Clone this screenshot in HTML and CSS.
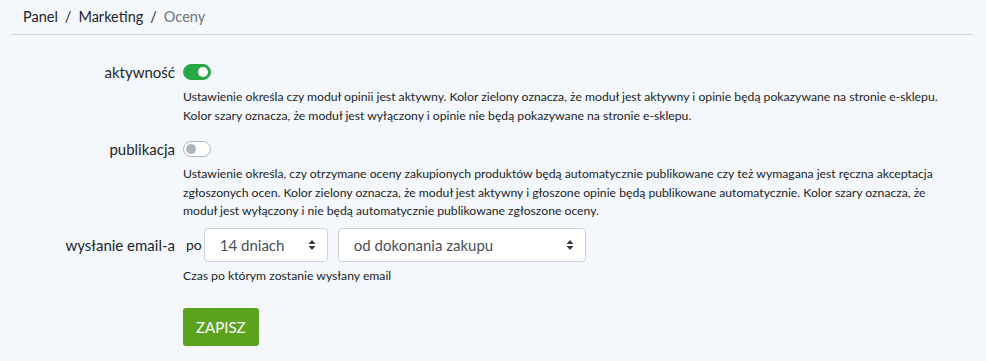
FILE: index.html
```html
<!DOCTYPE html>
<html lang="pl">
<head>
    <meta charset="UTF-8">
    <meta name="viewport" content="width=device-width, initial-scale=1.0">
    <title>Oceny</title>
    <link rel="stylesheet" href="styles.css">
</head>
<body>
    <div class="page">
        <nav class="breadcrumb">
            <a href="#">Panel</a>
            <span class="sep">/</span>
            <a href="#">Marketing</a>
            <span class="sep">/</span>
            <span class="current">Oceny</span>
        </nav>

        <form class="settings">
            <div class="row">
                <label class="row-label" for="active">aktywność</label>
                <div class="row-body">
                    <label class="switch">
                        <input type="checkbox" id="active" checked>
                        <span class="track"></span>
                    </label>
                    <p class="help">Ustawienie określa czy moduł opinii jest aktywny. Kolor zielony oznacza, że moduł jest aktywny i opinie będą pokazywane na stronie e-sklepu. Kolor szary oznacza, że moduł jest wyłączony i opinie nie będą pokazywane na stronie e-sklepu.</p>
                </div>
            </div>

            <div class="row">
                <label class="row-label" for="publish">publikacja</label>
                <div class="row-body">
                    <label class="switch">
                        <input type="checkbox" id="publish">
                        <span class="track"></span>
                    </label>
                    <p class="help">Ustawienie określa, czy otrzymane oceny zakupionych produktów będą automatycznie publikowane czy też wymagana jest ręczna akceptacja zgłoszonych ocen. Kolor zielony oznacza, że moduł jest aktywny i głoszone opinie będą publikowane automatycznie. Kolor szary oznacza, że moduł jest wyłączony i nie będą automatycznie publikowane zgłoszone oceny.</p>
                </div>
            </div>

            <div class="row row-email">
                <label class="row-label" for="days">wysłanie email-a</label>
                <div class="row-body">
                    <div class="email-line">
                        <span class="prefix">po</span>
                        <div class="select select-days">
                            <select id="days">
                                <option>14 dniach</option>
                            </select>
                            <svg class="caret" width="8" height="12" viewBox="0 0 8 12"><path d="M4 1L7.5 5H0.5Z M4 11L0.5 7H7.5Z" fill="#343a40"/></svg>
                        </div>
                        <div class="select select-from">
                            <select>
                                <option>od dokonania zakupu</option>
                            </select>
                            <svg class="caret" width="8" height="12" viewBox="0 0 8 12"><path d="M4 1L7.5 5H0.5Z M4 11L0.5 7H7.5Z" fill="#343a40"/></svg>
                        </div>
                    </div>
                    <p class="help">Czas po którym zostanie wysłany email</p>
                </div>
            </div>

            <div class="row">
                <div></div>
                <div class="row-body">
                    <button type="submit" class="save">ZAPISZ</button>
                </div>
            </div>
        </form>
    </div>
</body>
</html>
```

FILE: styles.css
```css
body { margin: 0; background: #f4f7fb; font-family: Lato, "Open Sans", sans-serif; color: #212529; }
.page { padding: 0 13px 0 11px; }

.breadcrumb { display: flex; gap: 7px; padding: 7px 12px 8px; border-bottom: 1px solid #d5d8db; font-size: 14.5px; line-height: 19px; }
.breadcrumb a { color: #212529; text-decoration: none; }
.breadcrumb .sep { color: #212529; }
.breadcrumb .current { color: #6c757d; }

.settings { padding-top: 27px; }
.row { display: grid; grid-template-columns: 164px 1fr; column-gap: 8px; margin-bottom: 14px; }
.row-label { text-align: right; font-size: 15px; line-height: 20px; }
.row-body { min-width: 0; }
.help { margin: 7px 0 0; padding-right: 20px; font-size: 12.2px; line-height: 18.5px; }

.switch { display: inline-block; position: relative; width: 28px; height: 16px; margin-top: 2px; vertical-align: top; }
.switch input { position: absolute; opacity: 0; margin: 0; }
.track { display: block; width: 28px; height: 16px; box-sizing: border-box; border-radius: 8px; border: 1px solid #adb5bd; background: #fff; position: relative; }
.track::after { content: ""; position: absolute; top: 2px; left: 2px; width: 10px; height: 10px; border-radius: 50%; background: #adb5bd; }
.switch input:checked + .track { background: #28a745; border-color: #28a745; }
.switch input:checked + .track::after { left: 14px; background: #fff; }

.row-email { margin-top: -7px; }
.row-email .row-label { line-height: 34px; }
.email-line { display: flex; align-items: center; }
.prefix { font-size: 14px; margin: 0 2px 0 3px; }
.select { position: relative; display: flex; }
.select-from { margin-left: 10px; }
.select select { appearance: none; -webkit-appearance: none; height: 34px; border: 1px solid #ced4da; border-radius: 4px; background: #fff; padding: 0 30px 0 15px; font-family: inherit; font-size: 15px; color: #495057; }
.caret { position: absolute; right: 12px; top: 11px; pointer-events: none; }
.select-days select { width: 124px; }
.select-from select { width: 248px; }
.row-email .help { margin-top: 5px; }

.save { margin-top: 9px; background: #5ba21f; color: #fff; border: none; border-radius: 3px; padding: 0 13px; height: 38px; font-family: inherit; font-size: 15px; cursor: pointer; }
.save:hover { background: #4d8a1a; }
```
